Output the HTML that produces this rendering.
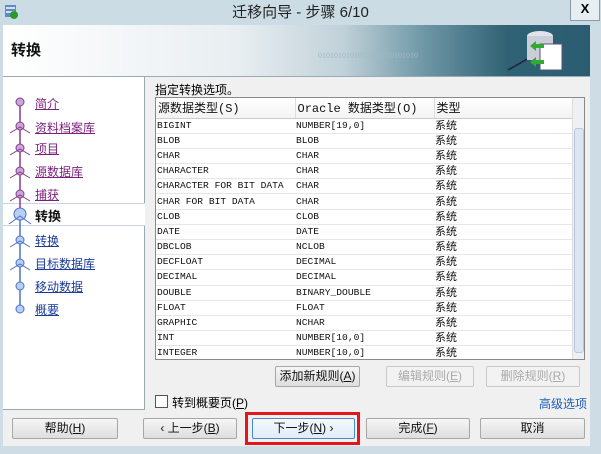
<!DOCTYPE html>
<html><head><meta charset="utf-8"><style>
*{margin:0;padding:0;box-sizing:border-box}
body{width:601px;height:454px;overflow:hidden;background:#cddce5;font-family:"Liberation Sans","Noto Sans CJK SC",sans-serif;font-size:12px;position:relative}
.abs{position:absolute}
#title{left:0;top:0;width:601px;height:25px;background:#cbdce5;text-align:center;line-height:25px;font-size:15px;color:#222}
#close{left:570px;top:0;width:30px;height:21px;border:1px solid #8a9aa6;border-top:none;background:#e6eef2;font-weight:bold;text-align:center;line-height:18px;font-size:13px}
#body{left:3px;top:25px;width:587px;height:421px;background:#f0f0f0}
#hdr{left:3px;top:25px;width:587px;height:52px;background:linear-gradient(90deg,#fff 0%,#e8eef1 40%,#c0d1d9 58%,#6d96a5 72%,#2f6274 86%,#2a5d70 100%);border-bottom:1px solid #9ab}
#hdr .t{position:absolute;left:8px;top:14px;font-size:15px;font-weight:bold;color:#111}
#left{left:3px;top:77px;width:142px;height:333px;background:#fff;border-right:1px solid #9aa;border-bottom:1px solid #9aa}
.it{position:absolute;left:35px;font-size:12px;text-decoration:underline}
.p{color:#7a1f7a}.b{color:#1a3b96}
#sel{left:3px;top:203px;width:142px;height:23px;background:#fff;border-top:1px solid #c8d4e6;border-bottom:1px solid #c8d4e6}
#tbl{left:155px;top:97px;width:430px;height:263px;border:1px solid #8a8a8a;background:#fff;overflow:hidden}
table{border-collapse:collapse;table-layout:fixed;font-family:"Liberation Mono","Noto Sans CJK SC",monospace;font-size:9.6px;color:#111}
td{height:15.2px;border-bottom:1px solid #e6e6e6;padding-left:1px;white-space:nowrap;overflow:hidden;line-height:14px}
td:nth-child(3){font-size:11px;font-family:"Liberation Sans","Noto Sans CJK SC",sans-serif}
th{height:20px;font-weight:normal;text-align:left;border-right:1px solid #ddd;border-bottom:1px solid #ccc;background:linear-gradient(#fff,#f3f3f3);padding-left:2px;font-size:12px;font-family:"Liberation Mono","Noto Sans CJK SC",monospace}
.sb{position:absolute;left:416px;top:0;width:13px;height:262px;background:#eef1f4;border-left:1px solid #ddd}
.btn{position:absolute;height:21px;border:1px solid #a7a7a7;border-radius:2px;background:linear-gradient(#f6f6f6,#dedede);text-align:center;line-height:19px;font-size:12px;color:#111}
.dis{color:#aaa;border-color:#c8c8c8;background:#f2f2f2}
</style></head><body>
<div id="title" class="abs">迁移向导 - 步骤 6/10</div>
<svg class="abs" style="left:4px;top:4px" width="15" height="15"><rect x="1" y="1" width="11" height="12" fill="#5a8ccc"/><rect x="2" y="3" width="9" height="2" fill="#dde"/><rect x="2" y="7" width="9" height="2" fill="#dde"/><circle cx="10" cy="11" r="4" fill="#2a9a2a"/></svg>
<div id="close" class="abs">X</div>
<div id="body" class="abs"></div>
<div id="hdr" class="abs"><span class="t">转换</span>
<span style="position:absolute;left:315px;top:26px;font-size:8px;color:#9fbac4;font-family:'Liberation Serif',serif">0101010101010101010101010</span>
<svg style="position:absolute;left:495px;top:3px" width="80" height="46"><line x1="10" y1="42" x2="40" y2="25" stroke="#223" stroke-width="1.5"/><ellipse cx="42" cy="8" rx="13" ry="5" fill="#e0e4ea"/><rect x="29" y="8" width="26" height="24" fill="#c9ced8"/><rect x="42" y="16" width="22" height="26" fill="#fff" stroke="#557"/><path d="M32 18l6-5v3h8v4h-8v3z" fill="#3a3"/><path d="M32 34l6-5v3h8v4h-8v3z" fill="#3a3"/></svg></div>
<div id="left" class="abs"></div>
<div id="sel" class="abs"></div>
<svg class="abs" style="left:3px;top:77px" width="40" height="333">
<line x1="17" y1="26" x2="17" y2="137" stroke="#8a3a8a" stroke-width="1.5"/>
<line x1="17" y1="137" x2="17" y2="232" stroke="#4a70d0" stroke-width="1.5"/>
<g fill="#c8a8d8" stroke="#8a3a8a" stroke-width="1">
<circle cx="17" cy="25" r="4"/>
<circle cx="17" cy="49" r="4"/><circle cx="17" cy="71" r="4"/><circle cx="17" cy="94" r="4"/><circle cx="17" cy="117" r="4"/></g>
<g stroke="#8a3a8a" fill="none"><path d="M7 56l10-6 10 6M7 78l10-6 10 6M7 101l10-6 10 6M7 124l10-6 10 6"/></g>
<g fill="#b8d0f0" stroke="#4a70d0"><circle cx="17" cy="137" r="6"/><circle cx="17" cy="163" r="4"/><circle cx="17" cy="186" r="4"/><circle cx="17" cy="209" r="4"/><circle cx="17" cy="232" r="4"/></g>
<g stroke="#4a70d0" fill="none"><path d="M6 147l11-8 11 8M7 170l10-6 10 6M7 193l10-6 10 6"/></g>
</svg>
<span class="abs it p" style="top:95px">简介</span>
<span class="abs it p" style="top:119px">资料档案库</span>
<span class="abs it p" style="top:140px">项目</span>
<span class="abs it p" style="top:163px">源数据库</span>
<span class="abs it p" style="top:186px">捕获 </span>
<span class="abs it" style="top:206px;text-decoration:none;font-weight:bold;color:#111;font-size:13px">转换</span>
<span class="abs it b" style="top:232px">转换</span>
<span class="abs it b" style="top:255px">目标数据库</span>
<span class="abs it b" style="top:278px">移动数据</span>
<span class="abs it b" style="top:301px">概要</span>
<span class="abs" style="left:155px;top:81px;font-size:12px">指定转换选项。</span>
<div id="tbl" class="abs">
<table><colgroup><col style="width:139px"><col style="width:139px"><col style="width:139px"></colgroup><tr><th>源数据类型(S)</th><th>Oracle 数据类型(O)</th><th>类型</th></tr>
<tr><td>BIGINT</td><td>NUMBER[19,0]</td><td>系统</td></tr>
<tr><td>BLOB</td><td>BLOB</td><td>系统</td></tr>
<tr><td>CHAR</td><td>CHAR</td><td>系统</td></tr>
<tr><td>CHARACTER</td><td>CHAR</td><td>系统</td></tr>
<tr><td>CHARACTER FOR BIT DATA</td><td>CHAR</td><td>系统</td></tr>
<tr><td>CHAR FOR BIT DATA</td><td>CHAR</td><td>系统</td></tr>
<tr><td>CLOB</td><td>CLOB</td><td>系统</td></tr>
<tr><td>DATE</td><td>DATE</td><td>系统</td></tr>
<tr><td>DBCLOB</td><td>NCLOB</td><td>系统</td></tr>
<tr><td>DECFLOAT</td><td>DECIMAL</td><td>系统</td></tr>
<tr><td>DECIMAL</td><td>DECIMAL</td><td>系统</td></tr>
<tr><td>DOUBLE</td><td>BINARY_DOUBLE</td><td>系统</td></tr>
<tr><td>FLOAT</td><td>FLOAT</td><td>系统</td></tr>
<tr><td>GRAPHIC</td><td>NCHAR</td><td>系统</td></tr>
<tr><td>INT</td><td>NUMBER[10,0]</td><td>系统</td></tr>
<tr><td>INTEGER</td><td>NUMBER[10,0]</td><td>系统</td></tr>
</table>
<div class="sb"><div style="position:absolute;left:1px;top:30px;width:10px;height:225px;background:#dbe6f1;border:1px solid #b8c8d8;border-radius:3px"></div></div>
</div>
<div class="btn" style="left:275px;top:366px;width:85px">添加新规则(<u>A</u>)</div>
<div class="btn dis" style="left:386px;top:366px;width:88px">编辑规则(<u>E</u>)</div>
<div class="btn dis" style="left:486px;top:366px;width:94px">删除规则(<u>R</u>)</div>
<div class="abs" style="left:155px;top:395px;width:13px;height:13px;border:1px solid #555;background:#fff"></div>
<span class="abs" style="left:172px;top:394px">转到概要页(<u>P</u>)</span>
<span class="abs" style="left:539px;top:395px;color:#1a5fb4">高级选项</span>
<div class="btn" style="left:12px;top:418px;width:106px">帮助(<u>H</u>)</div>
<div class="btn" style="left:143px;top:418px;width:94px">‹ 上一步(<u>B</u>)</div>
<div class="btn" style="left:252px;top:418px;width:103px;border-color:#4a8ac8;background:linear-gradient(#f4f9fd,#e0ecf7)">下一步(<u>N</u>) ›</div>
<div class="abs" style="left:245px;top:412px;width:115px;height:33px;border:3px solid #e4161b"></div>
<div class="btn" style="left:366px;top:418px;width:104px">完成(<u>F</u>)</div>
<div class="btn" style="left:480px;top:418px;width:105px">取消</div>
</body></html>
